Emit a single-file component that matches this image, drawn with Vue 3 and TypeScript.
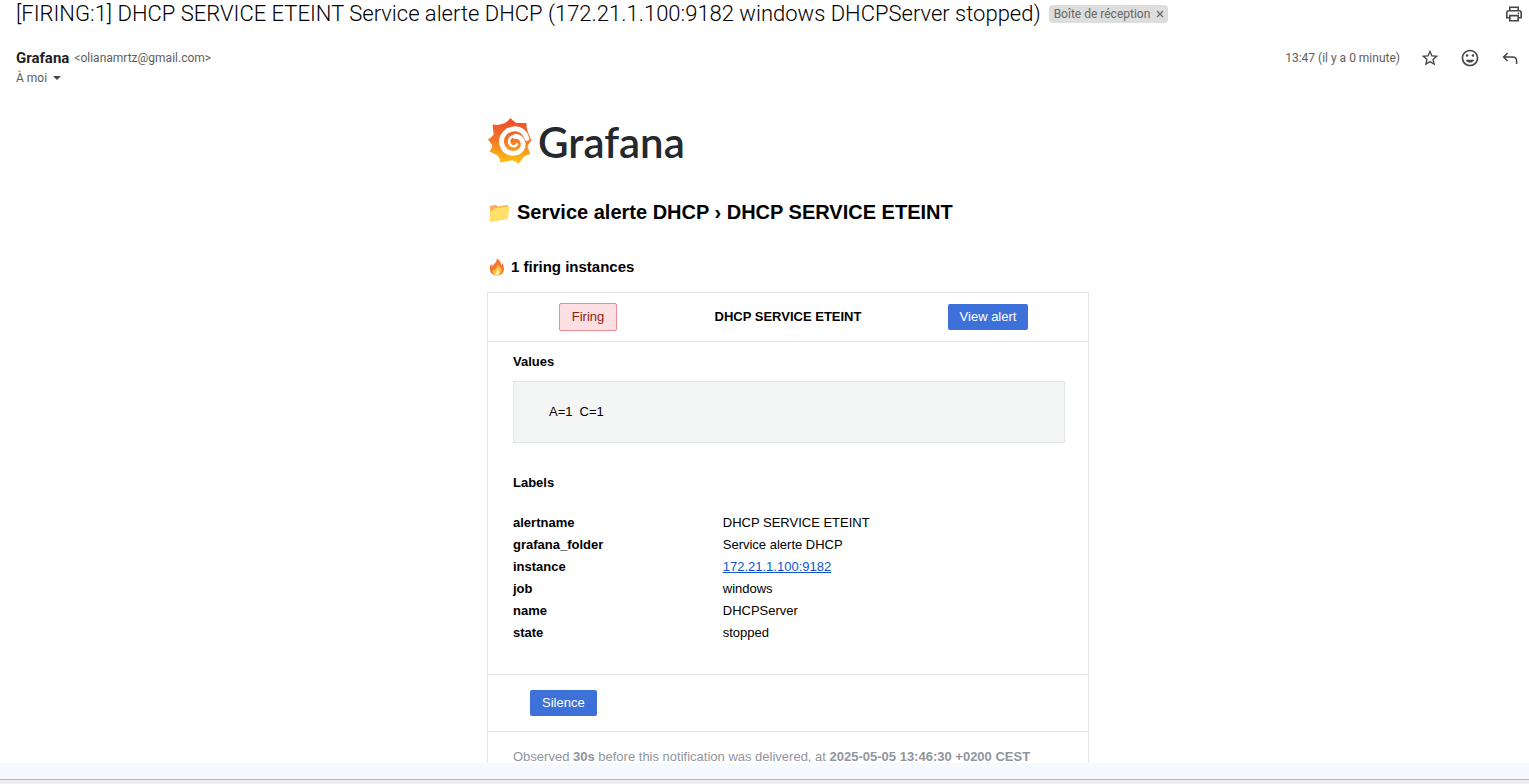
<script setup lang="ts">
interface Label {
  name: string
  value: string
  href?: string
}

const subject =
  '[FIRING:1] DHCP SERVICE ETEINT Service alerte DHCP (172.21.1.100:9182 windows DHCPServer stopped)'

const labels: Label[] = [
  { name: 'alertname', value: 'DHCP SERVICE ETEINT' },
  { name: 'grafana_folder', value: 'Service alerte DHCP' },
  { name: 'instance', value: '172.21.1.100:9182', href: 'http://172.21.1.100:9182' },
  { name: 'job', value: 'windows' },
  { name: 'name', value: 'DHCPServer' },
  { name: 'state', value: 'stopped' },
]
</script>

<template>
  <div class="window">
    <main class="mail">
      <header class="subject-bar">
        <h1 class="subject">{{ subject }}</h1>
        <span class="chip">
          Boîte de réception
          <button class="chip-close" type="button" aria-label="Retirer le libellé">
            <svg viewBox="0 0 8 8" width="8" height="8"><path d="M1 1l6 6M7 1L1 7" stroke="#666" stroke-width="1.2" /></svg>
          </button>
        </span>
        <button class="icon-button print" type="button" aria-label="Imprimer">
          <svg viewBox="0 0 18 18" width="18" height="18" fill="none" stroke="#444746" stroke-width="1.6">
            <path d="M4.8 5.8V2.3h8.4v3.5" />
            <path d="M4.6 12.7H1.8V8q0-2.2 2.2-2.2h10q2.2 0 2.2 2.2v4.7h-2.8" />
            <path d="M4.8 10.6h8.4v5.1H4.8z" />
            <circle cx="13.4" cy="8.3" r=".9" fill="#444746" stroke="none" />
          </svg>
        </button>
      </header>

      <section class="sender-bar">
        <div class="sender">
          <p class="from"><strong>Grafana</strong><span>&lt;olianamrtz@gmail.com&gt;</span></p>
          <button class="to" type="button">
            À moi
            <svg viewBox="0 0 8 4" width="8" height="4"><path d="M0 0h8L4 4z" fill="#444746" /></svg>
          </button>
        </div>
        <div class="actions">
          <time>13:47 (il y a 0 minute)</time>
          <button class="icon-button" type="button" aria-label="Suivre">
            <svg viewBox="0 0 24 24" width="20" height="20" fill="#444746">
              <path d="M22 9.24l-7.19-.62L12 2 9.19 8.63 2 9.24l5.46 4.73L5.82 21 12 17.27 18.18 21l-1.63-7.03L22 9.24zM12 15.4l-3.76 2.27 1-4.28-3.32-2.88 4.38-.38L12 6.1l1.71 4.04 4.38.38-3.32 2.88 1 4.28L12 15.4z" />
            </svg>
          </button>
          <button class="icon-button" type="button" aria-label="Ajouter une réaction">
            <svg viewBox="0 0 24 24" width="20" height="20" fill="#444746">
              <path d="M12 2C6.47 2 2 6.5 2 12s4.47 10 10 10 10-4.48 10-10S17.52 2 12 2zm0 18c-4.42 0-8-3.58-8-8s3.58-8 8-8 8 3.58 8 8-3.58 8-8 8z" />
              <circle cx="15.5" cy="9" r="1.5" /><circle cx="8.5" cy="9" r="1.5" />
              <path d="M6.900 14h10.200c-.8 2.100-2.700 3.500-5.100 3.500s-4.300-1.400-5.100-3.500z" />
            </svg>
          </button>
          <button class="icon-button" type="button" aria-label="Répondre">
            <svg viewBox="0 0 20 20" width="20" height="20" fill="none" stroke="#444746" stroke-width="1.5">
              <path d="M7.600 5L3.600 9l4 4M3.600 9h9q4 0 4 4v3" />
            </svg>
          </button>
        </div>
      </section>

      <article class="message">
        <div class="logo">
          <svg class="logo-mark" viewBox="0 0 44 46" width="44" height="46">
            <defs>
              <linearGradient id="sun" gradientUnits="userSpaceOnUse" x1="0" y1="0" x2="0" y2="46">
                <stop offset="0" stop-color="#ee4b28" />
                <stop offset=".45" stop-color="#f27329" />
                <stop offset="1" stop-color="#fdc70f" />
              </linearGradient>
            </defs>
            <path
              fill="url(#sun)"
              d="M22.500 0Q25.500 3.600 28.500 5L38.300 5Q38.600 10.500 39.600 13.600L43.500 22.500Q40.400 25.800 39.600 28.700L42.300 36Q38 36.800 35.600 39L30.800 45.700Q27.300 43 24 42.300L12.300 44.500Q11.800 40 9.600 37.400L1.600 33.500Q4.400 30 4.300 27.300L0 21.500Q4.200 19.200 5.600 16.500L4.600 6.500Q9.800 7.500 13.500 6Q18.800 5 22.500 0z"
            />
            <path
              fill="none" stroke="#fff" stroke-width="4.800" stroke-linecap="round"
              d="M39 20.500C36.500 13.500 31.500 10.400 26 10.800C18.500 11.400 13 17.500 13.500 24.500C14.200 31.500 20 36 26.500 35.200C32.500 34.400 36 29.500 35 24.600C34 20.200 30.500 18 27 18.600"
            />
            <path fill="none" stroke="#fff" stroke-width="2.400" stroke-linecap="round" d="M28 17.500C23.500 17.300 20.600 21 21.200 24.600C22 28.600 27 29.500 29 26.300" />
          </svg>
          <span class="wordmark">Grafana</span>
        </div>

        <h2 class="rule">
          <svg viewBox="0 0 22 20" width="22" height="20">
            <g transform="translate(0 1)">
              <path d="M2 4.300Q2 2.800 3.500 2.600L7.300 1.900Q8.200 1.800 8.800 2.600L9.800 3.600L18.800 2.100Q20.200 2 20.200 3.400V6L2 9z" fill="#f9ae5b" />
              <path d="M5 6.500Q5.200 5.700 6.200 5.500L20.300 3.300Q21.700 3.300 21.400 4.700L19.900 14.800Q19.700 16 18.600 16.300L3 19Q1.600 19.100 1.500 18L1.800 9.300Q1.900 8.200 3 8L4.400 7.700z" fill="#ffdf68" />
            </g>
          </svg>
          <span>Service alerte DHCP › DHCP SERVICE ETEINT</span>
        </h2>

        <h3 class="count">
          <svg viewBox="0 0 18 18" width="18" height="18">
            <path d="M8.500 0.500C11.800 1.800 13.200 4.200 13 7.200Q14.100 6.500 14 5.200C17.500 9.500 16.700 17.500 9.100 17.500C1.600 17.500.400 10.200 3.200 5.800Q3.600 7.900 4.700 8.300C5.800 5.300 9.400 4.500 8.500 0.500z" fill="#f4762d" />
            <path d="M9.300 6.800C12.700 9 14.300 11.200 13.300 14.100C12.500 16.400 10.900 17.300 9 17.300C6.700 17.300 5 16 4.600 13.900Q4.400 12.300 5.200 11Q5.900 12.300 6.800 12.100C7.700 10.500 9.500 9.500 9.300 6.800z" fill="#ffc247" />
            <path d="M9.100 11.200Q12.100 13.400 11.500 15.400Q10.900 17 9.100 17Q7 16.900 6.800 14.900Q7.900 15.200 8.500 14Q9.200 12.800 9.100 11.200z" fill="#fff3a6" />
          </svg>
          <span>1 firing instances</span>
        </h3>

        <section class="card">
          <div class="card-head">
            <span class="badge">Firing</span>
            <strong>DHCP SERVICE ETEINT</strong>
            <a class="action" href="#alert">View alert</a>
          </div>

          <div class="details">
            <h4>Values</h4>
            <div class="values"><span>A=1</span><span>C=1</span></div>
            <h4 id="labels-title">Labels</h4>
            <table class="labels" aria-labelledby="labels-title">
              <tbody>
                <tr v-for="label in labels" :key="label.name">
                  <th scope="row">{{ label.name }}</th>
                  <td>
                    <a v-if="label.href" :href="label.href">{{ label.value }}</a>
                    <template v-else>{{ label.value }}</template>
                  </td>
                </tr>
              </tbody>
            </table>
          </div>

          <div class="silence"><a class="action" href="#silence">Silence</a></div>

          <p class="observed">
            Observed <b>30s</b> before this notification was delivered, at <b>2025-05-05 13:46:30 +0200 CEST</b>
          </p>
        </section>
      </article>
    </main>
    <footer class="edge"></footer>
  </div>
</template>

<style>
body {
  background: #fff;
}
</style>

<style scoped>
.window {
  display: flex;
  flex-direction: column;
  height: 100vh;
  overflow: hidden;
  color: #000;
  font-family: "Liberation Sans", Arial, sans-serif;
  font-size: 13px;
  line-height: 22px;
}
.mail {
  flex: 1;
  min-height: 0;
  overflow: hidden;
}
h1, h2, h3, h4, p {
  margin: 0;
}
button {
  padding: 0;
  border: 0;
  background: none;
  color: inherit;
  font: inherit;
}
svg {
  display: block;
  flex: none;
}
.subject-bar, .sender-bar {
  display: flex;
  font-family: Roboto, sans-serif;
}
.subject-bar {
  align-items: center;
  height: 28px;
  padding: 0 6px 0 16px;
}
.subject {
  color: #000;
  font-size: 22px;
  font-weight: 300;
  line-height: 28px;
  white-space: nowrap;
}
.chip {
  display: flex;
  align-items: center;
  gap: 6px;
  height: 18px;
  margin-left: 8px;
  padding: 0 4px 0 5px;
  border-radius: 4px;
  background: #ddd;
  color: #666;
  font-size: 12px;
  white-space: nowrap;
}
.print {
  margin-left: auto;
}
.sender-bar {
  justify-content: space-between;
  padding: 20px 9px 0 16px;
  color: #5e5e5e;
  font-size: 12px;
  line-height: 20px;
}
.from {
  display: flex;
  align-items: center;
  gap: 5px;
  height: 20px;
}
.from strong {
  color: #1f1f1f;
  font-size: 15px;
}
.to {
  display: flex;
  align-items: center;
  gap: 6px;
  height: 20px;
}
.actions {
  display: flex;
  align-items: center;
  gap: 20px;
  height: 20px;
}
.message {
  width: 602px;
  margin: 0 auto;
  padding: 30px 0 0 47px;
}
.logo {
  display: flex;
  align-items: flex-start;
  gap: 6px;
  height: 46px;
  padding-left: 1px;
}
.wordmark {
  color: #24292e;
  font-family: Lato, sans-serif;
  font-size: 42px;
  font-weight: 600;
  line-height: 48px;
}
.rule, .count {
  display: flex;
  align-items: center;
  padding-left: 1px;
}
.rule {
  gap: 7px;
  margin-top: 34px;
  font-size: 20px;
  line-height: 28px;
}
.count {
  gap: 5px;
  margin-top: 30px;
  font-size: 15px;
  line-height: 22px;
}
.card {
  margin-top: 14px;
  border: 1px solid #e4e5e6;
}
.card-head {
  display: grid;
  grid-template-columns: repeat(3, 1fr);
  place-items: center;
  height: 48px;
  border-bottom: 1px solid #e4e5e6;
}
.badge {
  padding: 2px 12px;
  border: 1px solid #ef8b92;
  border-radius: 2px;
  background: #fbdfe2;
  color: #8a1f11;
}
.action {
  display: inline-block;
  padding: 2px 12px;
  border-radius: 2px;
  background: #3d71d9;
  color: #fff;
  text-decoration: none;
}
.details {
  padding: 9px 23px 30px 25px;
}
h4 {
  font-size: 13px;
  line-height: 22px;
}
.values {
  display: flex;
  gap: 7px;
  margin: 8px 0 29px;
  padding: 19px 35px;
  border: 1px solid #e4e5e6;
  background: #f4f5f5;
}
.labels {
  width: 100%;
  margin-top: 18px;
  border-collapse: collapse;
}
.labels th, .labels td {
  padding: 0;
  text-align: left;
}
.labels th {
  width: 38%;
}
.labels a {
  color: #15c;
}
.silence {
  display: flex;
  padding: 15px 42px;
  border-top: 1px solid #e4e5e6;
  border-bottom: 1px solid #e4e5e6;
}
.observed {
  padding: 14px 25px;
  color: #91959d;
}
.edge {
  flex: none;
  height: 17px;
  border-bottom: 4px solid #eee;
  background: #f6fafe;
  box-shadow: inset 0 -1px #b8b8b8;
}
</style>
